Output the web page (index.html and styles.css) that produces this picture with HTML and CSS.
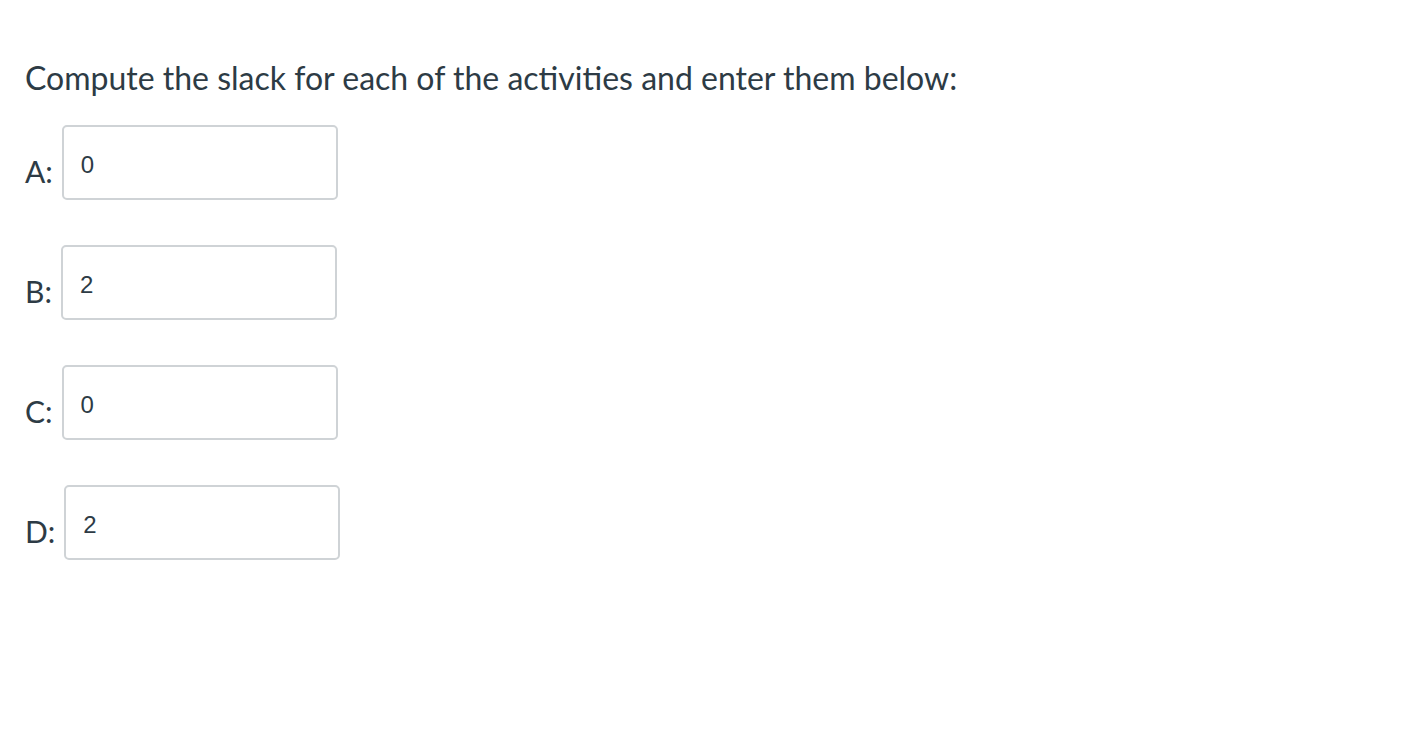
FILE: index.html
```html
<!DOCTYPE html>
<html lang="en">
<head>
<meta charset="utf-8">
<title>Slack</title>
<link rel="stylesheet" href="styles.css">
</head>
<body>
<div class="question">
  <p class="prompt">Compute the slack for each of the activities and enter them below:</p>
  <div class="answers">
    <div class="row"><span class="label">A:</span><input class="box" type="text" value="0"></div>
    <div class="row"><span class="label">B:</span><input class="box" type="text" value="2"></div>
    <div class="row"><span class="label">C:</span><input class="box" type="text" value="0"></div>
    <div class="row"><span class="label">D:</span><input class="box" type="text" value="2"></div>
  </div>
</div>
</body>
</html>
```
FILE: styles.css
```css
html, body {
  margin: 0;
  padding: 0;
  background: #ffffff;
}
body {
  font-family: Lato, "Noto Sans", sans-serif;
  color: #2d3b45;
}
.question {
  padding: 56px 25px 0 25px;
}
.prompt {
  margin: 0;
  font-size: 32px;
  line-height: 44px;
}
.answers {
  display: flex;
  flex-direction: column;
  gap: 45px;
  margin-top: 25px;
}
.row {
  display: flex;
  align-items: center;
}
.label {
  font-size: 30px;
  line-height: 36px;
  margin-top: 17px;
  margin-right: 9px;
}
.box {
  box-sizing: border-box;
  width: 276px;
  height: 75px;
  border: 2px solid #cfd3d6;
  border-radius: 5px;
  padding: 5px 17px 0 17px;
  font-family: "Liberation Sans", Arial, sans-serif;
  font-size: 24px;
  color: #2d3b45;
  background: #fff;
  outline: none;
}
```
